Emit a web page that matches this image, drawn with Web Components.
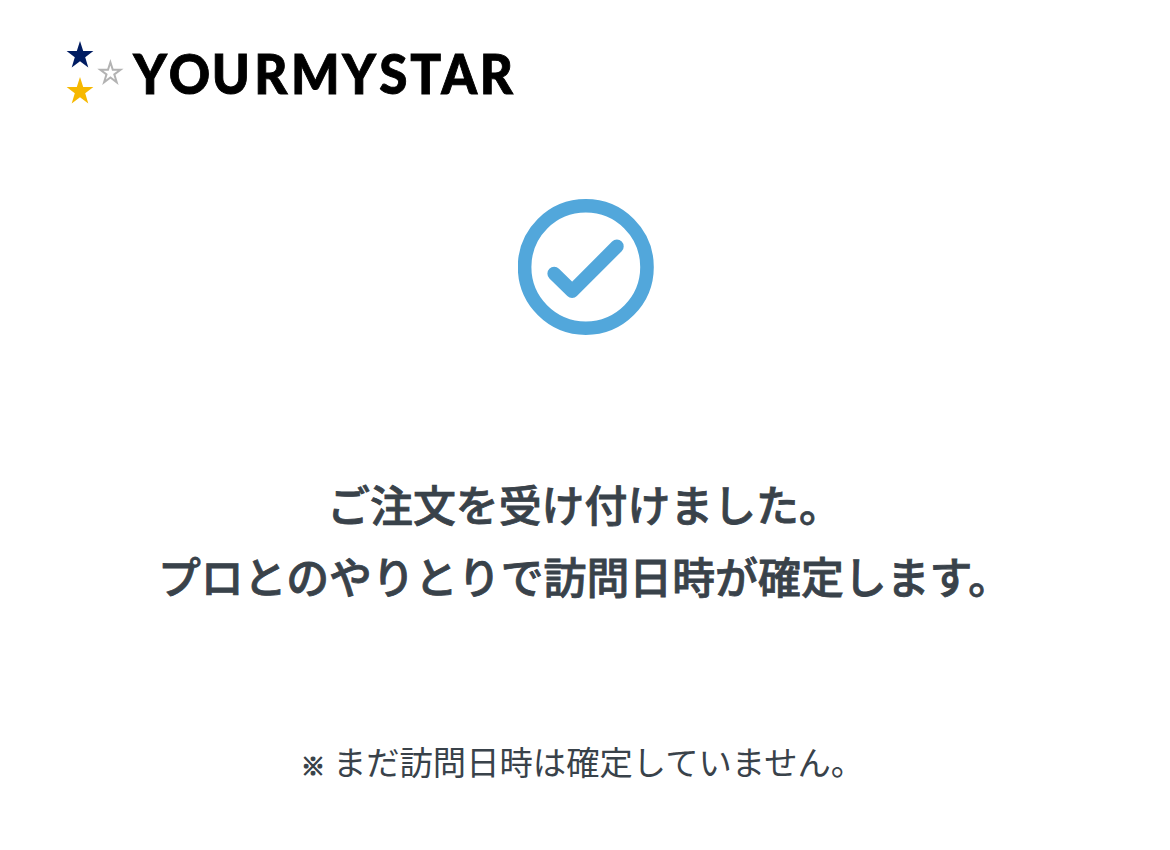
<!DOCTYPE html>
<html lang="ja">
<head>
<meta charset="utf-8">
<title>YOURMYSTAR</title>
<style>
  body {
    margin: 0;
    background: #fff;
    color: #39424a;
    font-family: "Noto Sans CJK JP", sans-serif;
  }
</style>
</head>
<body>
<order-complete>
  <brand-logo slot="header"></brand-logo>
  <check-mark slot="icon"></check-mark>
  <order-message slot="message">ご注文を受け付けました。<br>プロとのやりとりで訪問日時が確定します。</order-message>
  <order-note slot="note">まだ訪問日時は確定していません。</order-note>
</order-complete>

<script>
class BaseElement extends HTMLElement {
  constructor() {
    super();
    this.attachShadow({ mode: 'open' }).innerHTML = this.constructor.markup;
  }
}

class BrandLogo extends BaseElement {
  static markup = `
    <style>
      :host { display: block; width: 460px; height: 70px; }
      svg { display: block; }
      text { font: 900 55px Lato, sans-serif; fill: #000; stroke: #000; stroke-width: .9px; }
    </style>
    <svg width="460" height="70" viewBox="64 38 460 70" role="img" aria-label="YOURMYSTAR">
      <defs>
        <path id="star" d="M0 -14.5 3.2 -4.4H13.4L5.2 1.8 8.3 12 0 5.8 -8.3 12 -5.2 1.8 -13.4 -4.4H-3.2Z"/>
      </defs>
      <use href="#star" x="80" y="55.5" fill="#001c62"/>
      <use href="#star" x="80" y="91.5" fill="#f6b800"/>
      <path d="M110.4 62.2 112.8 69.8H120.5L114.3 74.4 116.7 82.2 110.4 77.4 104.1 82.2 106.5 74.4 100.3 69.8H108Z"
        fill="none" stroke="#b3b3b3" stroke-width="2"/>
      <text y="93.6" transform="scale(.93 1)"
        x="143.2 181.4 227.6 273.5 313 367.9 407.7 441.2 474.6 515.8">YOURMYSTAR</text>
    </svg>`;
}

class CheckMark extends BaseElement {
  static markup = `
    <style>
      :host { display: block; width: 136px; height: 136px; }
      svg { display: block; }
    </style>
    <svg width="136" height="136" viewBox="0 0 136 136" fill="none" stroke="#52a7db" stroke-width="13.6">
      <circle cx="67.8" cy="68" r="61.2"/>
      <path d="M36.2 74.6 54.1 92.2 98.9 47.4" stroke-linecap="round" stroke-linejoin="round"/>
    </svg>`;
}

class OrderMessage extends BaseElement {
  static markup = `
    <style>
      :host { display: block; }
      h1 {
        margin: 0;
        padding-right: 2px;
        font-size: 42.9px;
        font-weight: 500;
        -webkit-text-stroke: .8px currentColor;
        line-height: 72px;
        text-align: center;
        white-space: nowrap;
      }
    </style>
    <h1><slot></slot></h1>`;
}

class OrderNote extends BaseElement {
  static markup = `
    <style>
      :host { display: block; }
      p {
        display: flex;
        justify-content: center;
        align-items: baseline;
        gap: 8px;
        margin: 0;
        padding-right: 6px;
        font-size: 33.35px;
        line-height: 56px;
        white-space: nowrap;
      }
      .mark { font-size: 24px; font-weight: 700; -webkit-text-stroke: 1.2px currentColor; }
    </style>
    <p><span class="mark">※</span><slot></slot></p>`;
}

class OrderComplete extends BaseElement {
  static markup = `
    <style>
      :host {
        display: flex;
        flex-direction: column;
        height: 850px;
        box-sizing: border-box;
        overflow: hidden;
      }
      header { padding: 38px 64px 0; }
      main {
        display: flex;
        flex-direction: column;
        align-items: center;
        padding: 91px 0 0 1px;
      }
      .message { margin-top: 132px; }
      .note { margin-top: 122px; }
    </style>
    <header><slot name="header"></slot></header>
    <main>
      <slot name="icon"></slot>
      <div class="message"><slot name="message"></slot></div>
      <div class="note"><slot name="note"></slot></div>
    </main>`;
}

customElements.define('brand-logo', BrandLogo);
customElements.define('check-mark', CheckMark);
customElements.define('order-message', OrderMessage);
customElements.define('order-note', OrderNote);
customElements.define('order-complete', OrderComplete);
</script>
</body>
</html>
